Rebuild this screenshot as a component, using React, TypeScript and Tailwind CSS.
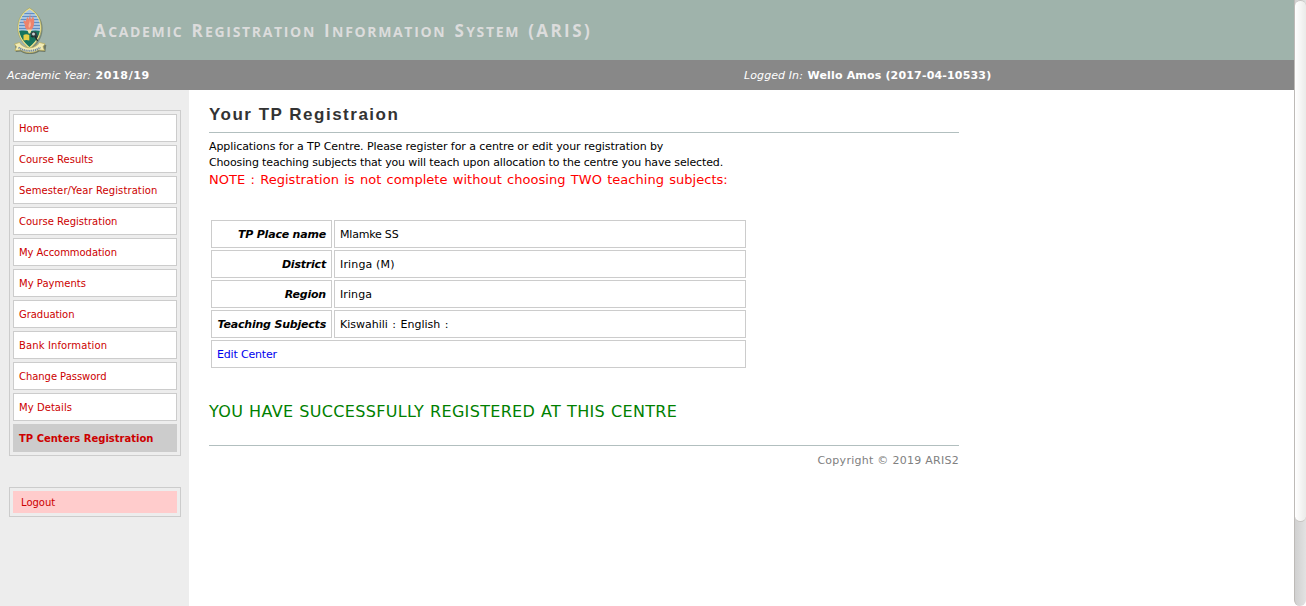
const menu = [
  { label: 'Home', cls: 'tracking-[0.1px]' },
  { label: 'Course Results', cls: '' },
  { label: 'Semester/Year Registration', cls: 'tracking-[0.1px]' },
  { label: 'Course Registration', cls: '' },
  { label: 'My Accommodation', cls: 'tracking-[-0.05px]' },
  { label: 'My Payments', cls: 'tracking-[0.03px]' },
  { label: 'Graduation', cls: 'tracking-[-0.05px]' },
  { label: 'Bank Information', cls: 'tracking-[0.12px]' },
  { label: 'Change Password', cls: 'tracking-[-0.05px]' },
  { label: 'My Details', cls: 'tracking-[0.06px]' },
];

const details = [
  { name: 'TP Place name', value: 'Mlamke SS', cls: 'tracking-[-0.2px]' },
  { name: 'District', value: 'Iringa (M)', cls: 'tracking-[0.15px]' },
  { name: 'Region', value: 'Iringa', cls: 'tracking-[0.1px]' },
  { name: 'Teaching Subjects', value: 'Kiswahili : English :', cls: '[word-spacing:1px]' },
];

const title = ['Academic', 'Registration', 'Information', 'System'];

function Crest() {
  return (
    <svg width="34" height="47" viewBox="0 0 34 47" className="block shrink-0">
      <defs>
        <clipPath id="shield">
          <path d="M16.500 2.500C9 7 5.500 14 6 22c.4 7 4.500 13 10.500 18C22.500 35 26.600 29 27 22c.5-8-3-15-10.500-19.500Z" />
        </clipPath>
      </defs>
      <path d="M18 2C27 8 30.500 16 29.500 24c-.6 7-5 14-11 18Z" fill="#5c6b5e" opacity=".6" />
      <path d="M1.500 37.500 7 36l2 3c5 3 11 3 16 0l2-3 5.500 1-1 7-6-.5c-6 3.500-13 3.500-18.500 0l-5 .5Z" fill="#5c6450" transform="translate(.8 1)" opacity=".75" />
      <path d="M16.500 1C8.500 5.500 4.500 13 4.800 22c.4 8 5.200 15 11.700 19.800C23 37 27.900 30 28.300 22 28.600 13 24.500 5.500 16.500 1Z" fill="#f0e692" stroke="#a19c58" strokeWidth=".6" />
      <g clipPath="url(#shield)">
        <rect width="34" height="25" fill="#a8c4e2" />
        <path d="M5 6.500h24M5 9.500h24M5 12.500h24M5 15.500h24M5 18.500h24M5 21.500h24" stroke="#5f8fc5" strokeWidth="1.200" />
        <path d="M4 24.500c4-1.500 8-1.500 12.500 0 4-1.500 8-1.500 12.500 0V43H4Z" fill="#16745d" />
      </g>
      <path d="M16.800 6c1.500 3-.4 4 1.600 6 1.200-.6.800-2 1.400-3 2 4 1.500 6 1.200 8.500-.6 3-1.500 5-3.500 6h-2.500c-2.500-1.500-3.500-3.500-3.300-6.500-1.200-1-1.500-2.500-.7-4 .5 1 1 1.300 1.700 1.300.2-2 1.200-3 1.700-4.300.6.800.8 1.500.8 2.500 1.500-2 1.700-4 1.600-6.500Z" fill="#ed836c" />
      <path d="M16.500 13c1 3-2 4-.5 8 3-2 2-5 .5-8Z" fill="#f7b49a" />
      <path d="M14.200 22.500h4.600l-1.500 4h-1.600Z" fill="#f2e5a0" />
      <path d="M10.500 28c2-1 4-.7 5.800 0v5.500c-2-.8-4-.8-5.800 0Z" fill="#e6cf47" />
      <path d="m17 27 2.500-2.500 3.500.5 2 4.500-2 2.500-3-3Z" fill="#343e40" />
      <circle cx="20.500" cy="27" r="1.500" fill="#c6d0d0" />
      <path d="m22 29 2.500 5M18 29l2.500 1" stroke="#202c2b" strokeWidth="1.400" />
      <path d="M1.500 37 6.500 35.500l2 2.500c5 3.800 11 3.800 16 0l2-2.500 5.500 1.300-2 3 1.500 3.700-6-.5c-5.500 3.500-12.500 3.500-17.500 0l-6 .5 1.500-3.700Z" fill="#f2ebb4" stroke="#b8aa57" strokeWidth=".7" />
      <path d="M5.500 40.500c7 4.500 15 4.500 22 0" fill="none" stroke="#6783a4" strokeWidth="2" strokeDasharray="1.200 .7" />
    </svg>
  );
}

export default function App() {
  return (
    <div className="flex h-[606px] w-[1306px] overflow-hidden bg-white font-['DejaVu_Sans',sans-serif] text-[11px] leading-4 text-black">
      <div className="flex min-w-0 flex-1 flex-col">
        <header className="flex h-[60px] shrink-0 items-start bg-[#9fb3ab] pt-[7px] pl-[13px]">
          <Crest />
          <h1 className="mt-[11px] ml-[47px] whitespace-nowrap font-['Open_Sans',sans-serif] text-[17px] leading-[26px] font-bold tracking-[2.4px] text-[#dcdcdc] [word-spacing:1.3px]">
            {title.map((w) => (
              <span key={w}>
                {w[0]}
                <span className="text-[14px] font-bold tracking-[1.66px] uppercase">{w.slice(1)}</span>{' '}
              </span>
            ))}
            (ARIS)
          </h1>
        </header>
        <div className="flex h-[30px] shrink-0 items-center bg-[#888888] pt-px pl-[7px] whitespace-nowrap text-white">
          <div className="w-[737px]"><i className="tracking-[-0.05px]">Academic Year:</i> <b className="ml-px tracking-[0.65px]">2018/19</b></div>
          <div><i className="tracking-[0.1px]">Logged In:</i> <b className="ml-px tracking-[0.17px]">Wello Amos (2017-04-10533)</b></div>
        </div>
        <div className="flex flex-1">
          <aside className="w-[189px] shrink-0 bg-[#ededed] pt-5 pl-[9px] text-[#cc0000]">
            <nav className="flex w-[172px] flex-col gap-[3px] border border-[#cccccc] p-[3px] text-[10px]">
              {menu.map((m) => (
                <a key={m.label} className={`flex h-7 items-center border border-[#cccccc] bg-white pt-0.5 pl-[5px] whitespace-nowrap ${m.cls}`}>
                  {m.label}
                </a>
              ))}
              <a className="flex h-7 items-center bg-[#cccccc] pt-0.5 pl-1.5 font-bold whitespace-nowrap">TP Centers Registration</a>
            </nav>
            <div className="mt-[31px] w-[172px] border border-[#cccccc] p-[3px] text-[10px]">
              <a className="flex h-[22px] items-center bg-[#ffcccc] pt-0.5 pl-2">Logout</a>
            </div>
          </aside>
          <main className="ml-5 w-[750px]">
            <h2 className="h-[43px] border-b border-[#b2bfbf] pt-[13px] font-['Liberation_Sans',sans-serif] text-[17px] leading-6 font-bold tracking-[1.5px] text-[#333333]">
              Your TP Registraion
            </h2>
            <p className="mt-1.5 tracking-[-0.075px] whitespace-nowrap">Applications for a TP Centre. Please register for a centre or edit your registration by</p>
            <p className="tracking-[-0.14px] whitespace-nowrap">Choosing teaching subjects that you will teach upon allocation to the centre you have selected.</p>
            <p className="text-[13px] leading-[18px] tracking-[0.03px] whitespace-nowrap text-[#ff0000] [word-spacing:1.1px]">
              NOTE : Registration is not complete without choosing TWO teaching subjects:
            </p>
            <div className="mt-[31px] ml-0.5 grid w-[535px] grid-cols-[121px_412px] gap-0.5 whitespace-nowrap">
              {details.map((d) => (
                <div key={d.name} className="contents">
                  <div className="flex h-7 items-center justify-end border border-[#cccccc] pt-0.5 pr-[5px] font-bold tracking-[-0.2px] italic">{d.name}</div>
                  <div className={`flex h-7 items-center border border-[#cccccc] pt-0.5 pl-[5px] ${d.cls}`}>{d.value}</div>
                </div>
              ))}
              <div className="col-span-2 flex h-7 items-center border border-[#cccccc] pt-0.5 pl-[5px] tracking-[-0.17px] text-[#0000ee]">Edit Center</div>
            </div>
            <p className="mt-[34px] text-[16px] leading-5 tracking-[0.32px] whitespace-nowrap text-[#008000] [word-spacing:0.5px]">YOU HAVE SUCCESSFULLY REGISTERED AT THIS CENTRE</p>
            <footer className="mt-[23px] border-t border-[#b2bfbf] pt-[7px] text-right tracking-[0.27px] text-[#808080]">Copyright © 2019 ARIS2</footer>
          </main>
        </div>
      </div>
      <div className="w-3 shrink-0 overflow-hidden rounded-b-[6px] border-l border-[#bdbab7] bg-linear-to-r from-[#d0d0d0] to-[#e2e2e2]">
        <div className="h-[522px] rounded-[6px] border-y border-[#c8c5c2] bg-linear-to-r from-white to-[#ebebe9]" />
      </div>
    </div>
  );
}
